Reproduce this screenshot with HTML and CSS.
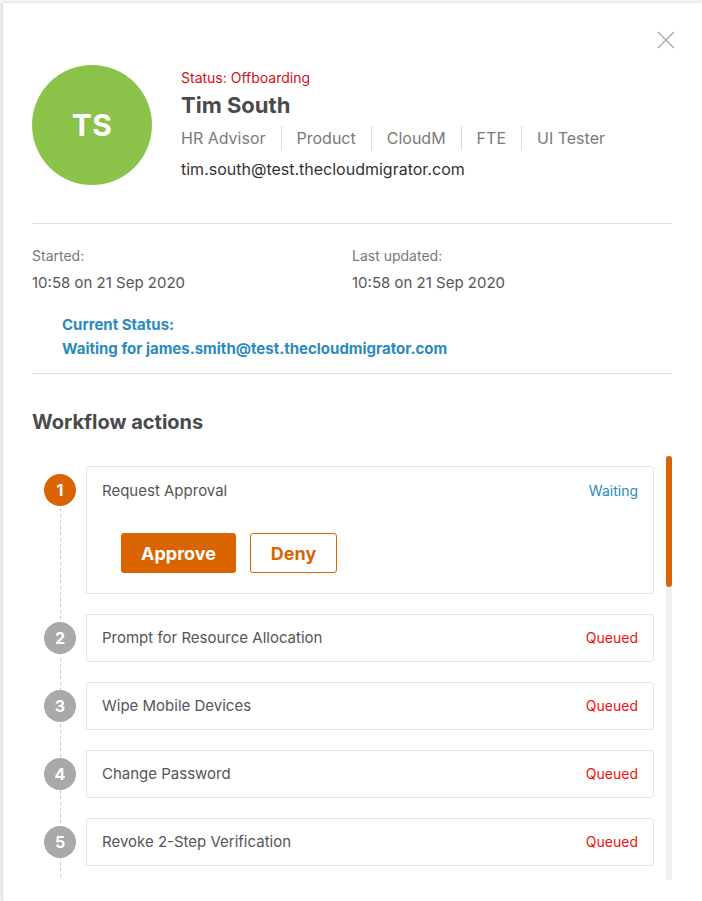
FILE: index.html
```html
<!DOCTYPE html>
<html lang="en">
<head>
<meta charset="utf-8">
<title>Tim South – Offboarding</title>
<link rel="stylesheet" href="styles.css">
</head>
<body>
<div class="panel">
  <button class="close" aria-label="Close">
    <svg width="18" height="18" viewBox="0 0 18 18"><path d="M1 1L17 17M17 1L1 17" stroke="#a9a9a9" stroke-width="1.4" fill="none"/></svg>
  </button>

  <header class="profile">
    <div class="avatar">TS</div>
    <div class="info">
      <div class="status-line">Status: Offboarding</div>
      <h1 class="name">Tim South</h1>
      <ul class="tags">
        <li>HR Advisor</li>
        <li>Product</li>
        <li>CloudM</li>
        <li>FTE</li>
        <li>UI Tester</li>
      </ul>
      <div class="email">tim.south@test.thecloudmigrator.com</div>
    </div>
  </header>

  <hr class="divider first">

  <section class="meta">
    <div class="meta-item">
      <div class="meta-label">Started:</div>
      <div class="meta-value">10:58 on 21 Sep 2020</div>
    </div>
    <div class="meta-item">
      <div class="meta-label">Last updated:</div>
      <div class="meta-value">10:58 on 21 Sep 2020</div>
    </div>
  </section>

  <div class="current">
    <div>Current Status:</div>
    <div>Waiting for james.smith@test.thecloudmigrator.com</div>
  </div>

  <hr class="divider second">

  <h2 class="section-title">Workflow actions</h2>

  <div class="steps-area">
    <ol class="steps">
      <li class="step active">
        <span class="num">1</span>
        <div class="card">
          <div class="card-row"><span class="step-name">Request Approval</span><span class="state waiting">Waiting</span></div>
          <div class="actions">
            <button class="btn approve">Approve</button>
            <button class="btn deny">Deny</button>
          </div>
        </div>
      </li>
      <li class="step"><span class="num">2</span><div class="card"><div class="card-row"><span class="step-name">Prompt for Resource Allocation</span><span class="state queued">Queued</span></div></div></li>
      <li class="step"><span class="num">3</span><div class="card"><div class="card-row"><span class="step-name">Wipe Mobile Devices</span><span class="state queued">Queued</span></div></div></li>
      <li class="step"><span class="num">4</span><div class="card"><div class="card-row"><span class="step-name">Change Password</span><span class="state queued">Queued</span></div></div></li>
      <li class="step"><span class="num">5</span><div class="card"><div class="card-row"><span class="step-name">Revoke 2-Step Verification</span><span class="state queued">Queued</span></div></div></li>
    </ol>
    <div class="scrollbar" aria-hidden="true"><div class="thumb"></div></div>
  </div>
</div>
</body>
</html>
```
FILE: styles.css
```css
* { box-sizing: border-box; }

html, body {
  margin: 0;
  padding: 0;
  height: 100%;
  overflow: hidden;
}

body {
  background: #f6f6f6;
  font-family: Inter, "Noto Sans", "Liberation Sans", sans-serif;
  color: #555;
}

.panel {
  position: relative;
  margin: 3px 0 0 2px;
  height: calc(100vh - 3px);
  background: #fff;
  box-shadow: 0 0 4px rgba(0, 0, 0, 0.16);
  border-left: 1px solid #e0e0e0;
  padding: 62px 30px 0 29px;
}

.close {
  position: absolute;
  top: 28px;
  right: 27px;
  width: 18px;
  height: 18px;
  padding: 0;
  border: 0;
  background: none;
  cursor: pointer;
}
.close svg { display: block; }

/* Profile header */
.profile {
  display: flex;
  align-items: flex-start;
  gap: 29px;
}

.avatar {
  width: 120px;
  height: 120px;
  border-radius: 50%;
  background: #8bc34a;
  color: #fff;
  font-weight: 700;
  font-size: 30px;
  display: flex;
  align-items: center;
  justify-content: center;
  letter-spacing: 0.5px;
  flex: none;
}

.info { padding-top: 4px; }

.status-line {
  font-size: 14px;
  line-height: 18px;
  color: #d0101b;
}

.name {
  margin: 4px 0 0;
  font-size: 22px;
  line-height: 28px;
  font-weight: 700;
  color: #4a4a4a;
}

.tags {
  list-style: none;
  margin: 7px 0 0;
  padding: 0;
  display: flex;
  font-size: 16px;
  line-height: 24px;
  color: #7a7a7a;
}
.tags li {
  padding: 0 15px;
  border-left: 1px solid #dcdcdc;
  height: 24px;
}
.tags li:first-child { padding-left: 0; border-left: 0; }

.email {
  margin-top: 8px;
  font-size: 16px;
  line-height: 22px;
  color: #333;
}

/* Dividers */
.divider {
  border: 0;
  border-top: 1px solid #dedede;
  margin: 0;
}
.divider.first { margin-top: 38px; }
.divider.second { margin-top: 12px; }

/* Meta */
.meta {
  display: grid;
  grid-template-columns: 320px 1fr;
  padding-top: 23px;
}
.meta-label {
  font-size: 14px;
  line-height: 18px;
  color: #777;
}
.meta-value {
  margin-top: 7px;
  font-size: 15px;
  line-height: 22px;
  color: #555;
}

.current {
  margin-top: 19px;
  padding-left: 30px;
  font-size: 15px;
  line-height: 24px;
  font-weight: 700;
  color: #2b8abd;
}

.section-title {
  margin: 34px 0 0;
  font-size: 20px;
  line-height: 28px;
  font-weight: 700;
  color: #4a4a4a;
}

/* Steps */
.steps-area {
  margin-top: 20px;
  height: 424px;
  display: flex;
}

.steps {
  flex: 1;
  list-style: none;
  margin: 0;
  padding: 10px 12px 0 0;
  overflow: hidden;
  display: flex;
  flex-direction: column;
  gap: 20px;
  background-image: repeating-linear-gradient(to bottom, #c8c8c8 0 3px, transparent 3px 6px);
  background-size: 1px 100%;
  background-position: 28px 40px;
  background-repeat: no-repeat;
}

.scrollbar {
  flex: none;
  width: 6px;
  background: #efefef;
}
.thumb {
  height: 131px;
  border-radius: 3px;
  background: #d96400;
}

.step {
  display: flex;
  align-items: flex-start;
}

.num {
  flex: none;
  width: 32px;
  height: 32px;
  margin: 8px 10px 0 12px;
  border-radius: 50%;
  background: #a9a9a9;
  color: #fff;
  font-weight: 700;
  font-size: 16px;
  line-height: 32px;
  text-align: center;
}
.step.active .num { background: #d96400; }

.card {
  flex: 1;
  border: 1px solid #e4e4e4;
  border-radius: 3px;
  padding: 13px 15px;
  background: #fff;
}
.step.active .card { padding: 14px 15px 20px; }

.card-row {
  display: flex;
  justify-content: space-between;
  align-items: center;
  line-height: 20px;
}
.step-name {
  font-size: 15px;
  color: #555;
}
.state { font-size: 14px; }
.state.waiting { color: #2b8abd; }
.state.queued { color: #ee1111; }

.actions {
  display: flex;
  gap: 14px;
  margin: 32px 0 0 19px;
}
.btn {
  height: 40px;
  border-radius: 3px;
  font-family: inherit;
  font-size: 18px;
  font-weight: 700;
  cursor: pointer;
}
.btn.approve {
  width: 115px;
  background: #d96400;
  border: 1px solid #d96400;
  color: #fff;
}
.btn.deny {
  width: 87px;
  background: #fff;
  border: 1px solid #d96400;
  color: #d96400;
}
```
